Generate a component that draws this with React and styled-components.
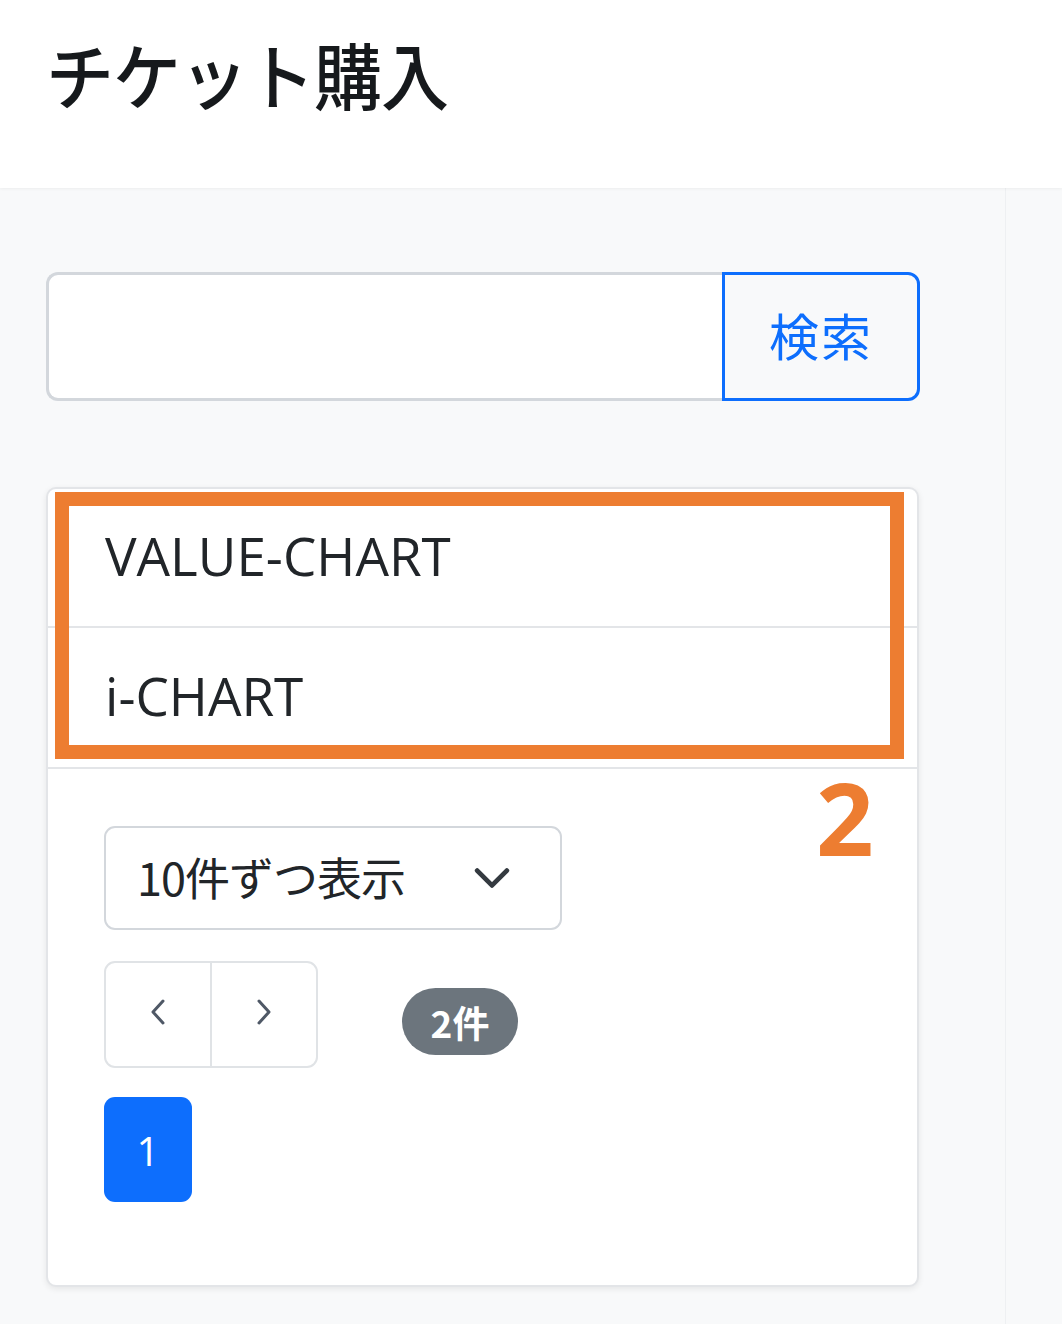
import React from "react";
import styled, { createGlobalStyle } from "styled-components";

const Global = createGlobalStyle`
  html, body { margin: 0; padding: 0; }
  body {
    background: #f8f9fa;
    font-family: "Open Sans", "Noto Sans CJK JP", sans-serif;
    color: #212529;
  }
  * { box-sizing: border-box; }
`;

const Page = styled.div`
  width: 1062px;
  min-height: 1324px;
  display: flex;
  flex-direction: column;
  background: #f8f9fa;
`;

const Header = styled.header`
  height: 188px;
  background: #ffffff;
  display: flex;
  align-items: center;
  padding-left: 46px;
  box-shadow: 0 1px 3px rgba(0, 0, 0, 0.05);
  position: relative;
  z-index: 1;
`;

const Title = styled.h1`
  margin: 0;
  font-family: "Noto Sans CJK JP", sans-serif;
  font-weight: 500;
  font-size: 68px;
  letter-spacing: -1px;
  color: #16191c;
  transform: translateY(-22px) scaleY(1.06);
`;

const Body = styled.div`
  flex: 1;
  display: flex;
`;

const Main = styled.main`
  width: 1006px;
  border-right: 1px solid #eef0f2;
  padding: 84px 0 40px 46px;
  display: flex;
  flex-direction: column;
  gap: 86px;
`;

const Side = styled.aside`
  flex: 1;
  background: #f8f9fa;
`;

const SearchGroup = styled.div`
  display: flex;
  width: 874px;
  height: 129px;
`;

const SearchInput = styled.input`
  flex: 1;
  height: 100%;
  border: 3px solid #d3d7dc;
  border-right: none;
  border-radius: 12px 0 0 12px;
  background: #ffffff;
  outline: none;
`;

const SearchButton = styled.button`
  width: 198px;
  height: 100%;
  border: 3px solid #0d6efd;
  border-radius: 0 12px 12px 0;
  background: #f8f9fa;
  color: #0d6efd;
  font-family: "Noto Sans CJK JP", sans-serif;
  font-size: 50px;
  letter-spacing: 2px;
  padding: 0;
  padding-bottom: 6px;
`;

const Card = styled.section`
  position: relative;
  width: 873px;
  height: 800px;
  background: #ffffff;
  border: 2px solid #e3e5e8;
  border-radius: 10px;
  box-shadow: 0 2px 6px rgba(0, 0, 0, 0.08);
  display: flex;
  flex-direction: column;
`;

const ListItem = styled.div`
  height: ${(p) => p.$h}px;
  display: flex;
  align-items: center;
  padding-left: 57px;
  padding-bottom: 4px;
  border-bottom: 2px solid #e3e5e8;
  font-family: "Open Sans", sans-serif;
  font-size: 53px;
  letter-spacing: 0;
  color: #212529;
`;

const Footer = styled.div`
  padding: 57px 0 0 56px;
  display: flex;
  flex-direction: column;
  align-items: flex-start;
`;

const Select = styled.div`
  width: 458px;
  height: 104px;
  border: 2.5px solid #d3d7dc;
  border-radius: 11px;
  display: flex;
  align-items: center;
  justify-content: space-between;
  padding: 0 50px 0 31px;
  font-family: "Noto Sans CJK JP", sans-serif;
  font-size: 45px;
  color: #212529;
`;

const SelectLabel = styled.span`
  letter-spacing: -1px;
  transform: translateY(-2px);
`;

const PagerRow = styled.div`
  margin-top: 31px;
  display: flex;
  align-items: center;
  gap: 84px;
`;

const PagerGroup = styled.div`
  display: flex;
  width: 214px;
  height: 107px;
  border: 2.5px solid #e0e3e6;
  border-radius: 11px;
`;

const PagerButton = styled.div`
  flex: 1;
  display: flex;
  align-items: center;
  justify-content: center;
  padding-bottom: 6px;
  & + & {
    border-left: 2.5px solid #e0e3e6;
  }
`;

const Badge = styled.span`
  width: 116px;
  height: 67px;
  border-radius: 34px;
  background: #6c757d;
  color: #ffffff;
  display: flex;
  align-items: center;
  justify-content: center;
  font-family: "Noto Sans CJK JP", sans-serif;
  font-weight: 700;
  font-size: 37px;
  margin-top: 14px;
`;

const PageNumber = styled.div`
  margin-top: 29px;
  width: 88px;
  height: 105px;
  border-radius: 11px;
  background: #0d6efd;
  color: #ffffff;
  display: flex;
  align-items: center;
  justify-content: center;
  font-family: "Open Sans", sans-serif;
  font-size: 40px;
  padding-top: 2px;
`;

const Highlight = styled.div`
  position: absolute;
  left: 7px;
  top: 3px;
  width: 849px;
  height: 267px;
  border: 14px solid #ed7d31;
  pointer-events: none;
`;

const Marker = styled.div`
  position: absolute;
  left: 768px;
  top: 278px;
  font-family: "Open Sans", sans-serif;
  font-weight: 700;
  font-size: 101px;
  line-height: 1;
  color: #ed7d31;
`;

const Chevron = ({ dir, size = 28, color = "#4f5866", w = 3 }) => {
  const pts = {
    left: "14,3 4,14 14,25",
    right: "4,3 14,14 4,25",
    down: "3,5 17,19 31,5",
  }[dir];
  const vb = dir === "down" ? "0 0 34 24" : "0 0 18 28";
  const width = dir === "down" ? 36 : 18;
  return (
    <svg width={width} height={size} viewBox={vb} fill="none">
      <polyline points={pts} stroke={color} strokeWidth={w} strokeLinecap="round" strokeLinejoin="round" />
    </svg>
  );
};

export default function App() {
  return (
    <>
      <Global />
      <Page>
        <Header>
          <Title>チケット購入</Title>
        </Header>
        <Body>
          <Main>
            <SearchGroup>
              <SearchInput type="text" />
              <SearchButton>検索</SearchButton>
            </SearchGroup>
            <Card>
              <ListItem $h={139}>VALUE-CHART</ListItem>
              <ListItem $h={141}>i-CHART</ListItem>
              <Footer>
                <Select>
                  <SelectLabel>10件ずつ表示</SelectLabel>
                  <Chevron dir="down" size={26} color="#343a40" w={4.5} />
                </Select>
                <PagerRow>
                  <PagerGroup>
                    <PagerButton>
                      <Chevron dir="left" />
                    </PagerButton>
                    <PagerButton>
                      <Chevron dir="right" />
                    </PagerButton>
                  </PagerGroup>
                  <Badge>2件</Badge>
                </PagerRow>
                <PageNumber>1</PageNumber>
              </Footer>
              <Highlight />
              <Marker>2</Marker>
            </Card>
          </Main>
          <Side />
        </Body>
      </Page>
    </>
  );
}
